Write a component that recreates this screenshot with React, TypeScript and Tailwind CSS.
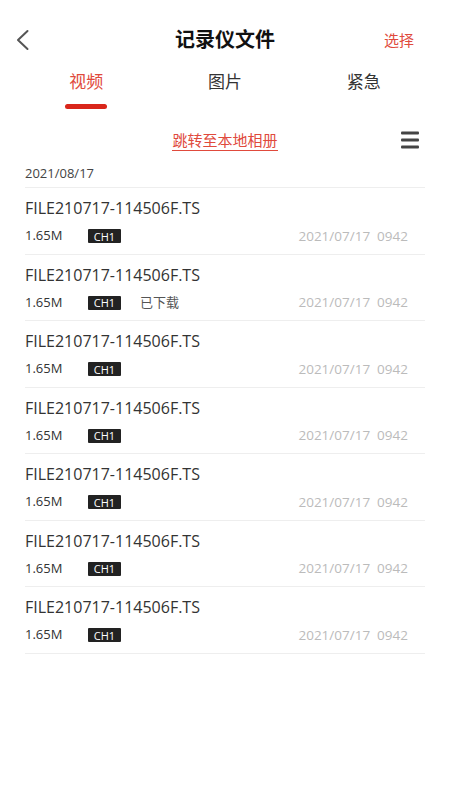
type FileItem = { name: string; size: string; channel: string; downloaded?: boolean; time: string }

const FILES: FileItem[] = [
  { name: 'FILE210717-114506F.TS', size: '1.65M', channel: 'CH1', time: '2021/07/17  0942' },
  { name: 'FILE210717-114506F.TS', size: '1.65M', channel: 'CH1', downloaded: true, time: '2021/07/17  0942' },
  { name: 'FILE210717-114506F.TS', size: '1.65M', channel: 'CH1', time: '2021/07/17  0942' },
  { name: 'FILE210717-114506F.TS', size: '1.65M', channel: 'CH1', time: '2021/07/17  0942' },
  { name: 'FILE210717-114506F.TS', size: '1.65M', channel: 'CH1', time: '2021/07/17  0942' },
  { name: 'FILE210717-114506F.TS', size: '1.65M', channel: 'CH1', time: '2021/07/17  0942' },
  { name: 'FILE210717-114506F.TS', size: '1.65M', channel: 'CH1', time: '2021/07/17  0942' },
]

const TABS = ['视频', '图片', '紧急']

const FONT = "font-['Open_Sans','Noto_Sans_CJK_SC',sans-serif]"

export default function App() {
  return (
    <div className={`min-h-[800px] w-[450px] bg-white ${FONT}`}>
      {/* Header */}
      <header className="relative mt-5 flex h-10 items-center justify-center">
        <button className="absolute left-[15px] top-1/2 -translate-y-1/2">
          <svg width="16" height="22" viewBox="0 0 16 22" fill="none">
            <polyline points="12.5,2 3,11 12.5,20" stroke="#555" strokeWidth="2" strokeLinecap="round" strokeLinejoin="round" />
          </svg>
        </button>
        <h1 className="text-[20px] font-bold text-[#111]">记录仪文件</h1>
        <button className="absolute right-[36px] top-1/2 -translate-y-1/2 text-[15px] text-[#e04a3c]">选择</button>
      </header>

      {/* Tabs */}
      <nav className="mt-3 grid grid-cols-3 px-[17px]">
        {TABS.map((t, i) => (
          <div key={t} className="flex flex-col items-center">
            <span className={`text-[17px] leading-5 ${i === 0 ? 'text-[#e04a3c]' : 'text-[#333]'}`}>{t}</span>
            {i === 0 ? (
              <div className="mt-3 h-[5px] w-[42px] rounded-full bg-[#d9261b]" />
            ) : (
              <div className="mt-3 h-[5px]" />
            )}
          </div>
        ))}
      </nav>

      {/* Jump link + menu */}
      <div className="relative mt-[21px] flex h-5 items-center justify-center">
        <span className="border-b border-[#e04a3c] text-[15px] leading-5 text-[#e04a3c]">跳转至本地相册</span>
        <div className="absolute right-[31px] top-1/2 flex -translate-y-1/2 flex-col gap-[4px]">
          <span className="h-[3px] w-[18px] rounded-[1px] bg-[#444]" />
          <span className="h-[3px] w-[18px] rounded-[1px] bg-[#444]" />
          <span className="h-[3px] w-[18px] rounded-[1px] bg-[#444]" />
        </div>
      </div>

      {/* List */}
      <section className="mx-[25px] mt-[15px]">
        <div className="border-b border-[#eee] pb-[6px] text-[13px] leading-4 text-[#444]">2021/08/17</div>
        {FILES.map((f, i) => (
          <div key={i} className="h-[66.5px] border-b border-[#eee] pt-[9px]">
            <div className="text-[16px] leading-[22px] text-[#333]">{f.name}</div>
            <div className="mt-[9px] flex h-4 items-center text-[13px]">
              <span className="w-[63px] text-[#333]">{f.size}</span>
              <span className="flex h-[14px] w-[33px] items-center justify-center rounded-[1px] bg-[#222] text-[11px] leading-none text-white">
                {f.channel}
              </span>
              {f.downloaded && <span className="ml-[19px] text-[13px] text-[#555]">已下载</span>}
              <span className="ml-auto mr-[17px] whitespace-pre text-[13.5px] text-[#bbb]">{f.time}</span>
            </div>
          </div>
        ))}
      </section>
    </div>
  )
}
